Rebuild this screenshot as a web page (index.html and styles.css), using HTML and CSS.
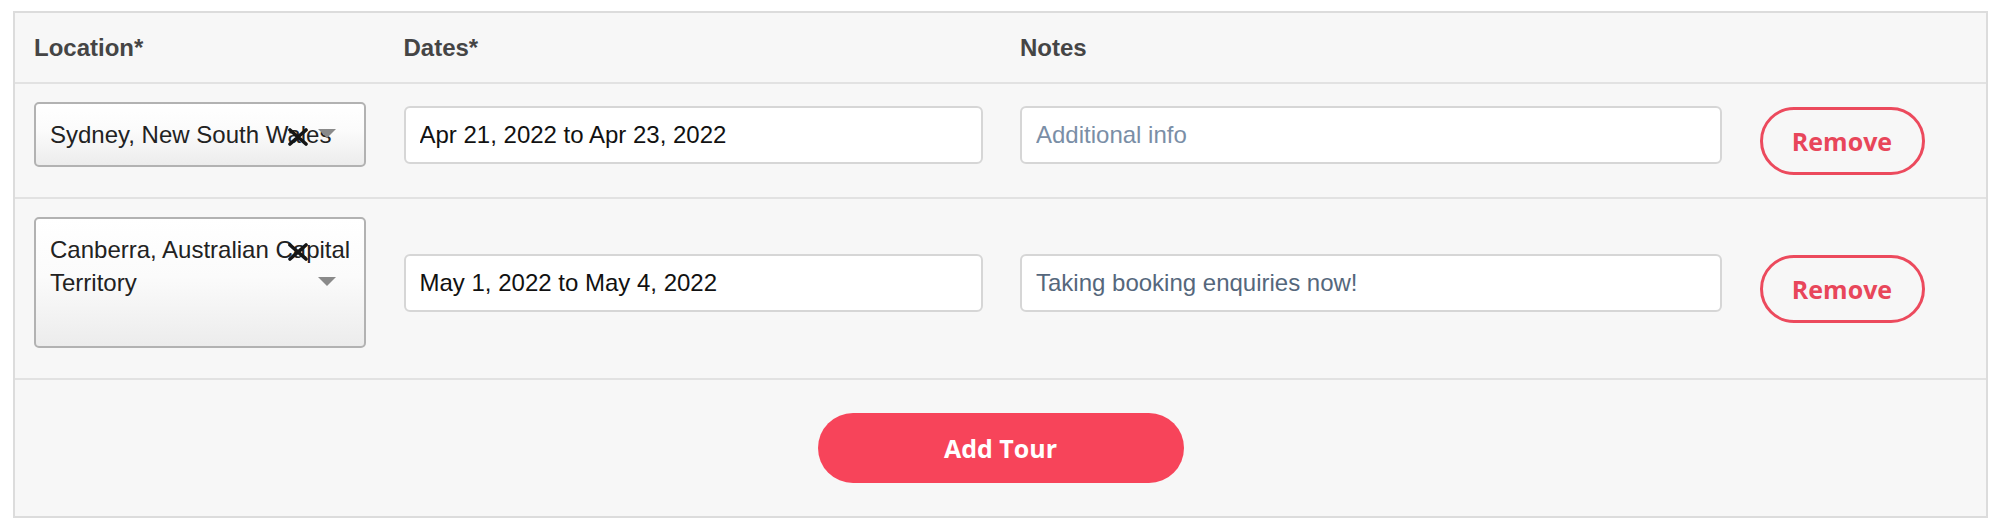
FILE: index.html
```html
<!DOCTYPE html>
<html lang="en">
<head>
<meta charset="utf-8">
<title>Tours</title>
<link rel="stylesheet" href="styles.css">
</head>
<body>
<div class="tours">
  <div class="tours-head">
    <div class="col-label">Location*</div>
    <div class="col-label">Dates*</div>
    <div class="col-label">Notes</div>
    <div></div>
  </div>

  <div class="tour-row">
    <div class="field">
      <div class="select">
        <span class="select-text">Sydney, New South Wales</span>
        <span class="select-clear"><svg width="22" height="18" viewBox="0 0 22 18"><path d="M3 2 L19 16 M19 2 L3 16" stroke="#151515" stroke-width="3.6" stroke-linecap="round"/></svg></span>
        <span class="select-arrow"></span>
      </div>
    </div>
    <div class="field"><input class="text-input" type="text" value="Apr 21, 2022 to Apr 23, 2022"></div>
    <div class="field"><input class="text-input notes" type="text" placeholder="Additional info"></div>
    <div class="action"><button class="btn-remove" type="button">Remove</button></div>
  </div>

  <div class="tour-row">
    <div class="field">
      <div class="select select-tall">
        <span class="select-text">Canberra, Australian Capital Territory</span>
        <span class="select-clear"><svg width="22" height="18" viewBox="0 0 22 18"><path d="M3 2 L19 16 M19 2 L3 16" stroke="#151515" stroke-width="3.6" stroke-linecap="round"/></svg></span>
        <span class="select-arrow"></span>
      </div>
    </div>
    <div class="field"><input class="text-input" type="text" value="May 1, 2022 to May 4, 2022"></div>
    <div class="field"><input class="text-input notes" type="text" value="Taking booking enquiries now!"></div>
    <div class="action"><button class="btn-remove" type="button">Remove</button></div>
  </div>

  <div class="tours-foot">
    <button class="btn-add" type="button">Add Tour</button>
  </div>
</div>
</body>
</html>
```

FILE: styles.css
```css
html, body {
  margin: 0;
  padding: 0;
  background: #ffffff;
}

body {
  font-family: "Liberation Sans", Arial, sans-serif;
  color: #222;
}

.tours {
  box-sizing: border-box;
  width: 1975px;
  margin: 11px 0 0 13px;
  border: 2px solid #dcdcdc;
  background: #f7f7f7;
}

.tours-head,
.tour-row {
  display: grid;
  grid-template-columns: 332px 579px 702px 165px;
  column-gap: 37.5px;
  padding: 0 19px;
  border-bottom: 2px solid #e2e2e2;
}

.tours-head {
  padding-top: 20px;
  padding-bottom: 20px;
  align-items: center;
}

.col-label {
  font-weight: 700;
  font-size: 24px;
  line-height: 29px;
  color: #454545;
}

.tour-row {
  padding-top: 18px;
  padding-bottom: 18px;
  align-items: center;
}

.field {
  padding-bottom: 12px;
}

.select {
  position: relative;
  box-sizing: border-box;
  min-height: 65px;
  padding: 14px 8px 14px 14px;
  border: 2px solid #b2b2b2;
  border-radius: 5px;
  background: linear-gradient(to bottom, #ffffff 0%, #fbfbfb 45%, #ececec 100%);
  font-size: 24px;
  line-height: 33px;
  color: #222;
}

.select-tall {
  min-height: 131px;
}

.select-text {
  display: block;
}

.select-clear {
  position: absolute;
  top: 24px;
  right: 55px;
  width: 22px;
  height: 18px;
  display: block;
}

.select-clear svg {
  display: block;
}

.select-arrow {
  position: absolute;
  right: 28px;
  top: 50%;
  margin-top: -6px;
  width: 0;
  height: 0;
  border-left: 9px solid transparent;
  border-right: 9px solid transparent;
  border-top: 9px solid #8a8a8a;
}

.text-input {
  box-sizing: border-box;
  display: block;
  width: 100%;
  height: 58px;
  margin: 0;
  padding: 0 14px;
  border: 2px solid #d6d6d6;
  border-radius: 6px;
  background: #ffffff;
  font-family: "Liberation Sans", Arial, sans-serif;
  font-size: 24px;
  color: #111;
  outline: none;
}

.text-input.notes {
  color: #55677c;
}

.text-input.notes::placeholder {
  color: #7a8ea6;
  opacity: 1;
}

.action {
  display: flex;
}

.btn-remove {
  box-sizing: border-box;
  width: 165px;
  height: 68px;
  padding: 0;
  border: 3px solid #ec4a5d;
  border-radius: 34px;
  background: transparent;
  font-family: "Open Sans", "Noto Sans", sans-serif;
  font-weight: 700;
  font-size: 25px;
  color: #e8465a;
  cursor: pointer;
}

.tours-foot {
  display: flex;
  justify-content: center;
  align-items: center;
  padding: 33px 0;
}

.btn-add {
  box-sizing: border-box;
  width: 366px;
  height: 70px;
  padding: 0;
  border: none;
  border-radius: 35px;
  background: #f7445a;
  font-family: "Open Sans", "Noto Sans", sans-serif;
  font-weight: 700;
  font-size: 25px;
  color: #ffffff;
  cursor: pointer;
}
```
